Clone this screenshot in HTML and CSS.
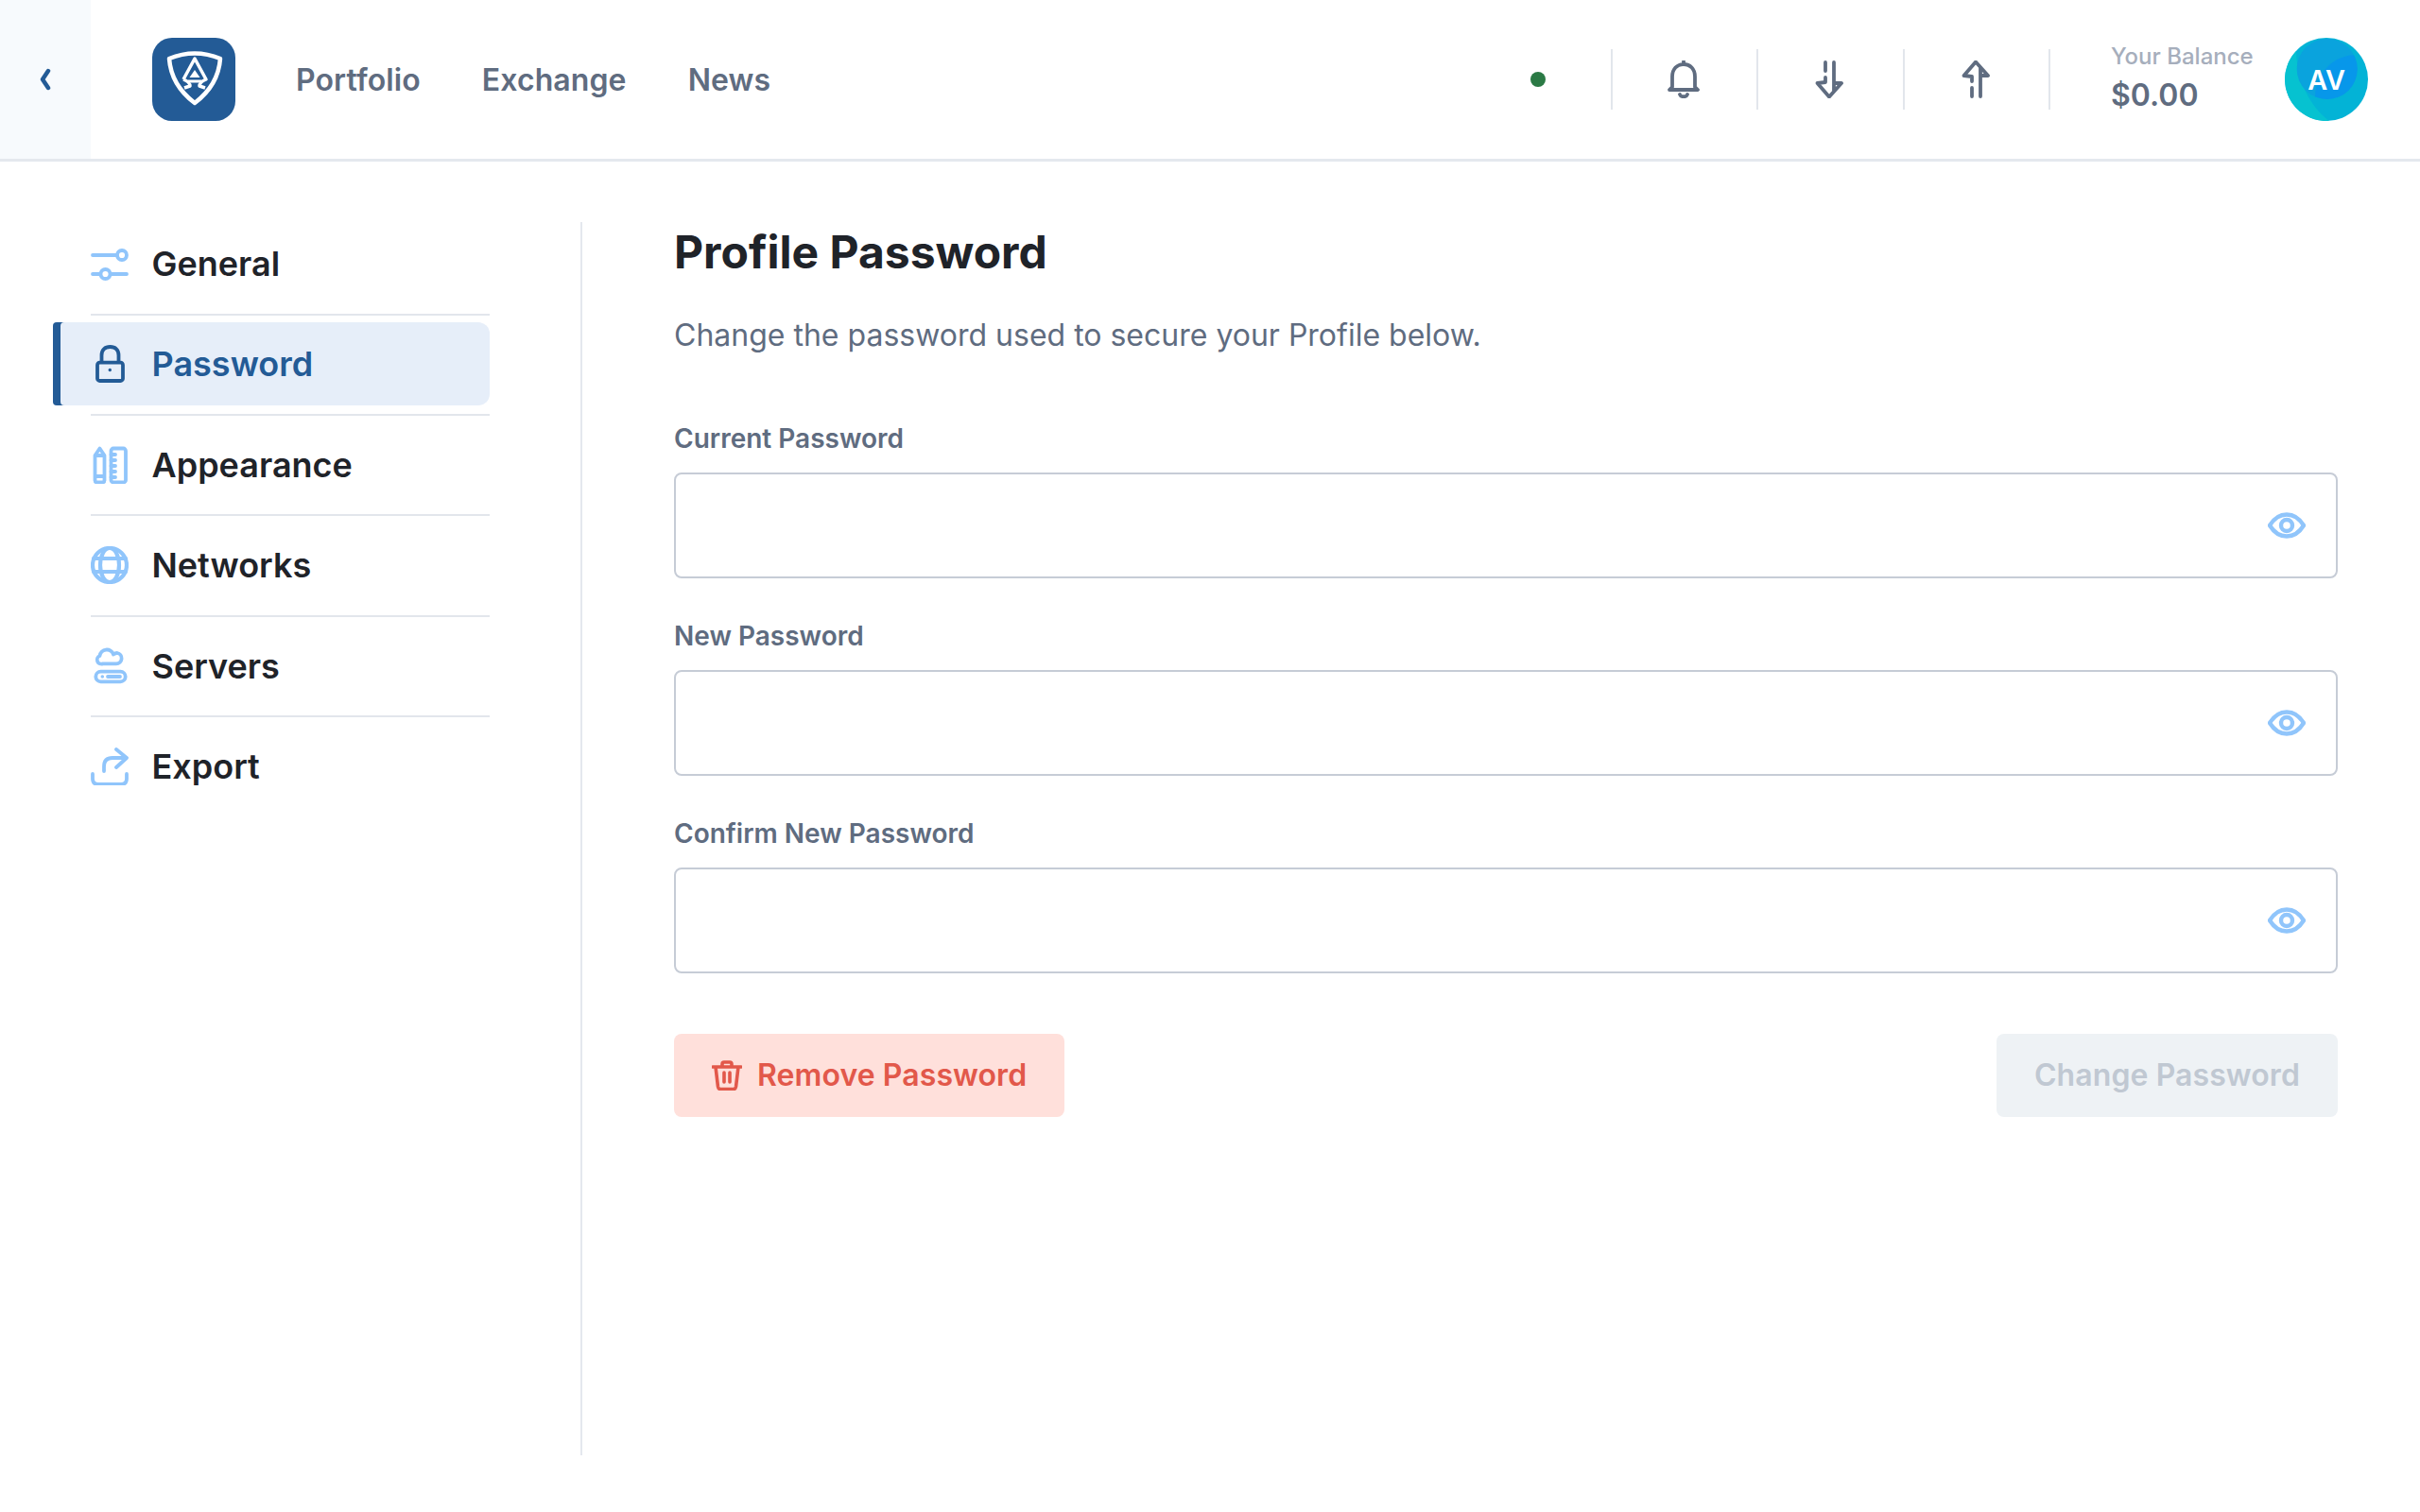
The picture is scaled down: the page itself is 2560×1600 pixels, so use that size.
FILE: index.html
```html
<!DOCTYPE html>
<html lang="en">
<head>
<meta charset="utf-8">
<title>Profile Password</title>
<link rel="stylesheet" href="styles.css">
</head>
<body>
<header class="topbar">
  <button class="back" type="button" aria-label="Back">
    <svg width="16" height="24" viewBox="0 0 16 24" class="back-icon"><path d="M11 3 L5 12 L11 21"/></svg>
  </button>
  <div class="logo">
    <svg width="88" height="88" viewBox="0 0 88 88">
      <rect width="88" height="88" rx="21" fill="#235b96"/>
      <path class="logo-line" d="M18 22 Q45 11 72 22 Q70 50 45 69 Q20 50 18 22 Z"/>
      <path class="logo-thin" d="M33 44 L45 22 L57 44 Q50 47 50 51 L56 53 M33 44 Q40 47 40 51 L34 53"/>
      <path class="logo-fill" d="M45 34 L50.500 42 H39.500 Z"/>
      <rect x="38" y="44.500" width="14" height="3" fill="#fff"/>
    </svg>
  </div>
  <nav class="main-nav">
    <a>Portfolio</a>
    <a>Exchange</a>
    <a>News</a>
  </nav>
  <div class="status-dot"></div>
  <div class="tool">
    <svg class="tool-icon" width="40" height="40" viewBox="0 0 40 40"><path d="M20 1 V4 M8 28 V17 C8 9 13 4 20 4 C27 4 32 9 32 17 V28 L35 31 H5 Z M16 36 C17 39 23 39 24 36"/></svg>
  </div>
  <div class="tool">
    <svg class="tool-icon" width="40" height="40" viewBox="0 0 40 40"><path d="M16 2 V11 M25 2 V32 M16 18 V23 L7.500 24 L20 38.500 L33 24 H25"/></svg>
  </div>
  <div class="tool">
    <svg class="tool-icon" width="40" height="40" viewBox="0 0 40 40"><path d="M16 38 V29 M25 38 V8 M16 22 V17 L7.500 16 L20 1.500 L33 16 H25"/></svg>
  </div>
  <div class="balance">
    <div class="balance-label">Your Balance</div>
    <div class="balance-value">$0.00</div>
  </div>
  <div class="avatar">
    <svg class="avatar-art" width="88" height="88" viewBox="0 0 88 88">
      <defs><clipPath id="avatar-inner"><circle cx="44.700" cy="33" r="32"/></clipPath></defs>
      <circle cx="44" cy="44" r="44" fill="#03b3d6"/>
      <path d="M12 14 C13 45 26 72 47 88 A44 44 0 0 1 12 14 Z" fill="#06c2d0"/>
      <circle cx="44.700" cy="33" r="32" fill="#0aa3dd"/>
      <circle cx="76" cy="62" r="44" fill="#0797ea" clip-path="url(#avatar-inner)"/>
    </svg>
    <span class="avatar-text">AV</span>
  </div>
</header>

<main class="page">
  <aside class="sidebar">
    <a class="side-item">
      <svg class="side-icon" width="40" height="40" viewBox="0 0 40 40"><path d="M2 11 H27 M2 31 H10 M21 31 H38"/><circle cx="33" cy="11" r="5"/><circle cx="15.500" cy="31" r="5"/></svg>
      <span>General</span>
    </a>
    <div class="side-sep"></div>
    <a class="side-item active">
      <svg class="side-icon" width="40" height="40" viewBox="0 0 40 40"><rect x="7" y="18.700" width="27" height="19.300" rx="2.500"/><path d="M11.500 18 V11 C11.500 5 15 2 20.500 2 C26 2 29.500 5 29.500 11 V18"/><circle class="icon-dot" cx="20.300" cy="26.500" r="1.700"/></svg>
      <span>Password</span>
    </a>
    <div class="side-sep"></div>
    <a class="side-item">
      <svg class="side-icon" width="40" height="40" viewBox="0 0 40 40"><path d="M4.500 10 L9.500 2.500 L14.500 10 V36 Q14.500 38.500 12 38.500 H7 Q4.500 38.500 4.500 36 Z M4.500 10 H14.500 M4.500 32 H14.500"/><rect x="21.500" y="2.500" width="15.500" height="36" rx="2.500"/><path d="M21.500 9 H26 M21.500 15 H26 M21.500 21 H26 M21.500 27 H26 M21.500 33 H26"/></svg>
      <span>Appearance</span>
    </a>
    <div class="side-sep"></div>
    <a class="side-item">
      <svg class="side-icon globe" width="40" height="40" viewBox="0 0 40 40"><circle cx="20" cy="20" r="18"/><ellipse cx="20" cy="20" rx="10" ry="18"/><path d="M3 13 H37 M3 27 H37"/></svg>
      <span>Networks</span>
    </a>
    <div class="side-sep"></div>
    <a class="side-item">
      <svg class="side-icon" width="40" height="40" viewBox="0 0 40 40"><path d="M13 17.300 H27 A5.700 5.700 0 0 0 28 6 Q26 6 24 7.500 A7.500 7.500 0 0 0 9.500 9 A4.500 4.500 0 0 0 13 17.300 Z"/><rect x="5.300" y="25.700" width="31.400" height="10.600" rx="5.300"/><path d="M18 31 H31"/><circle class="icon-dot" cx="12.300" cy="31" r="1.800"/></svg>
      <span>Servers</span>
    </a>
    <div class="side-sep"></div>
    <a class="side-item">
      <svg class="side-icon" width="40" height="40" viewBox="0 0 40 40"><path d="M2 28 V33 Q2 39 8 39 H32 Q38 39 38 33 V28 M14 25 V20 Q14 11 23 11 H37 M27 2 L38 11 L27 21"/></svg>
      <span>Export</span>
    </a>
  </aside>

  <section class="content">
    <h1 class="title">Profile Password</h1>
    <p class="subtitle">Change the password used to secure your Profile below.</p>
    <form class="form">
      <div class="field">
        <label class="label">Current Password</label>
        <div class="input-wrap">
          <input class="input" type="password">
          <svg class="eye" width="40" height="28" viewBox="0 0 40 28"><path d="M2 14 C7 6 13 2.500 20 2.500 C27 2.500 33 6 38 14 C33 22 27 25.500 20 25.500 C13 25.500 7 22 2 14 Z"/><circle cx="20" cy="14" r="6"/></svg>
        </div>
      </div>
      <div class="field">
        <label class="label">New Password</label>
        <div class="input-wrap">
          <input class="input" type="password">
          <svg class="eye" width="40" height="28" viewBox="0 0 40 28"><path d="M2 14 C7 6 13 2.500 20 2.500 C27 2.500 33 6 38 14 C33 22 27 25.500 20 25.500 C13 25.500 7 22 2 14 Z"/><circle cx="20" cy="14" r="6"/></svg>
        </div>
      </div>
      <div class="field">
        <label class="label">Confirm New Password</label>
        <div class="input-wrap">
          <input class="input" type="password">
          <svg class="eye" width="40" height="28" viewBox="0 0 40 28"><path d="M2 14 C7 6 13 2.500 20 2.500 C27 2.500 33 6 38 14 C33 22 27 25.500 20 25.500 C13 25.500 7 22 2 14 Z"/><circle cx="20" cy="14" r="6"/></svg>
        </div>
      </div>
      <div class="actions">
        <button class="btn btn-danger" type="button">
          <svg class="trash" width="32" height="32" viewBox="0 0 32 32"><path d="M1 7 H31 M11 6.500 V4 Q11 2 13 2 H19 Q21 2 21 4 V6.500 M4 7 L6.500 28 Q7 30.500 9 30.500 H23 Q25 30.500 25.500 28 L28 7 M13 13 V23 M19 13 V23"/></svg>
          <span>Remove Password</span>
        </button>
        <button class="btn btn-disabled" type="button">Change Password</button>
      </div>
    </form>
  </section>
</main>
</body>
</html>
```

FILE: styles.css
```css
* { box-sizing: border-box; }

html, body {
  margin: 0;
  background: #fff;
  font-family: Inter, "Noto Sans", sans-serif;
  color: #1f2329;
}

.topbar {
  display: flex;
  align-items: center;
  height: 171px;
  padding-right: 55px;
  border-bottom: 3px solid #e4e8ee;
}

.back {
  width: 96px;
  height: 168px;
  border: 0;
  padding: 0;
  background: #f7fafd;
  display: flex;
  align-items: center;
  justify-content: center;
}

.back-icon path {
  fill: none;
  stroke: #235b96;
  stroke-width: 4.500;
  stroke-linecap: round;
  stroke-linejoin: round;
}

.logo {
  width: 88px;
  height: 88px;
  margin-left: 65px;
  flex: none;
}

.logo-line { fill: none; stroke: #fff; stroke-width: 4.500; stroke-linejoin: round; }
.logo-thin { fill: none; stroke: #fff; stroke-width: 3.500; stroke-linejoin: round; }
.logo-fill { fill: #fff; }

.main-nav {
  display: flex;
  gap: 65px;
  margin-left: 64px;
  flex: 1;
  font-size: 32px;
  font-weight: 600;
  letter-spacing: 0.100px;
  color: #5f6c80;
}

.status-dot {
  width: 16px;
  height: 16px;
  border-radius: 50%;
  background: #2b7a45;
  margin-right: 69px;
}

.tool {
  width: 154.500px;
  height: 64px;
  border-left: 2px solid #e2e6ec;
  display: flex;
  align-items: center;
  justify-content: center;
  padding-right: 2px;
}

.tool-icon path {
  fill: none;
  stroke: #5f6c80;
  stroke-width: 3.800;
  stroke-linecap: round;
  stroke-linejoin: round;
}

.balance {
  height: 64px;
  border-left: 2px solid #e2e6ec;
  padding-left: 64px;
  width: 250px;
  display: flex;
  flex-direction: column;
  justify-content: center;
  gap: 4px;
}

.balance-label {
  font-size: 24px;
  line-height: 30px;
  color: #a6aebc;
  font-weight: 550;
}

.balance-value {
  font-size: 32px;
  line-height: 44px;
  color: #5f6c80;
  font-weight: 600;
}

.avatar {
  position: relative;
  width: 88px;
  height: 88px;
  flex: none;
  display: flex;
  align-items: center;
  justify-content: center;
}

.avatar-art {
  position: absolute;
  top: 0;
  left: 0;
}

.avatar-text {
  position: relative;
  color: #fff;
  font-size: 28.800px;
  font-weight: 600;
}

.page {
  display: flex;
  align-items: stretch;
  padding-top: 64px;
  height: 1369px;
}

.sidebar {
  width: 616px;
  padding-left: 56px;
  padding-right: 96px;
  border-right: 2px solid #e4e8ee;
  flex: none;
}

.side-item {
  display: flex;
  align-items: center;
  gap: 24.500px;
  height: 88px;
  padding-left: 40px;
  font-size: 36px;
  font-weight: 600;
  color: #1f2329;
}

.side-item.active {
  background: #e6eef9;
  color: #235b96;
  border-radius: 4px 12px 12px 4px;
  box-shadow: inset 8px 0 0 #235b96;
}

.side-icon { flex: none; }

.side-icon path, .side-icon rect, .side-icon circle, .side-icon ellipse {
  fill: none;
  stroke: #90c5fb;
  stroke-width: 3.800;
  stroke-linecap: round;
  stroke-linejoin: round;
}

.side-icon.globe circle, .side-icon.globe ellipse, .side-icon.globe path {
  stroke-width: 4.200;
}

.active .side-icon path, .active .side-icon rect, .active .side-icon circle {
  stroke: #235b96;
}

.side-icon .icon-dot {
  fill: #90c5fb;
  stroke: none;
}

.active .side-icon .icon-dot {
  fill: #235b96;
  stroke: none;
}

.side-sep {
  height: 2px;
  background: #e2e6ec;
  margin: 8.500px 0 7.900px 40px;
}

.content {
  flex: 1;
  padding: 0 87px 0 97px;
}

.title {
  margin: 0;
  font-size: 48px;
  line-height: 64px;
  font-weight: 700;
  color: #1f2329;
}

.subtitle {
  margin: 32px 0 0;
  font-size: 32px;
  line-height: 48px;
  color: #5f6c80;
}

.form { margin-top: 65px; }

.field { margin-bottom: 40.800px; }

.label {
  display: block;
  font-size: 28px;
  line-height: 40px;
  font-weight: 600;
  color: #5f6c80;
  margin-bottom: 16px;
}

.input-wrap {
  display: flex;
  align-items: center;
  height: 112px;
  border: 2px solid #c6ccd6;
  border-radius: 8px;
  padding-right: 32px;
}

.input {
  flex: 1;
  height: 100%;
  border: 0;
  outline: 0;
  background: transparent;
}

.eye path, .eye circle {
  fill: none;
  stroke: #90c5fb;
  stroke-width: 4.400;
}

.actions {
  display: flex;
  justify-content: space-between;
  margin-top: 64.400px;
}

.btn {
  height: 88px;
  border: 0;
  border-radius: 8px;
  padding: 0 40px;
  font-family: inherit;
  font-size: 32px;
  font-weight: 600;
  letter-spacing: 0.080px;
  display: flex;
  align-items: center;
}

.btn-danger {
  background: #ffe0db;
  color: #e2584a;
  gap: 16px;
}

.btn-disabled {
  background: #eef2f5;
  color: #c0c8d2;
}

.trash path {
  fill: none;
  stroke: #e2584a;
  stroke-width: 3.600;
  stroke-linecap: round;
  stroke-linejoin: round;
}
```
